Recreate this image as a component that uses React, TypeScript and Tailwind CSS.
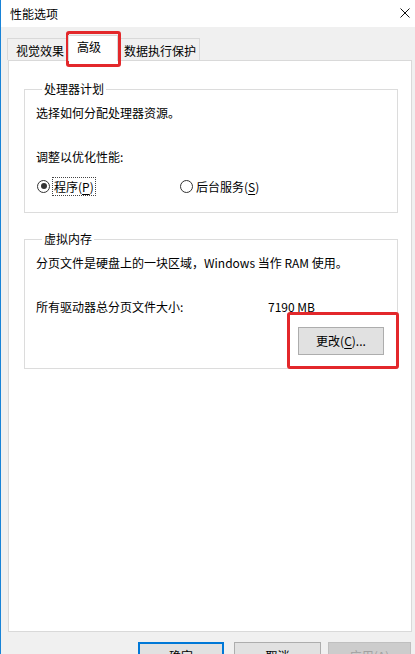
import React from 'react'

function Mn({ children }: { children: React.ReactNode }) {
  return <span className="underline underline-offset-2">{children}</span>
}

function Radio({ checked }: { checked?: boolean }) {
  return (
    <span className="flex h-[13px] w-[13px] shrink-0 items-center justify-center rounded-full border border-[#333333] bg-white">
      {checked && <span className="h-[6px] w-[6px] rounded-full bg-[#333333]" />}
    </span>
  )
}

function Group({ title, children }: { title: string; children: React.ReactNode }) {
  return (
    <fieldset className="border border-[#dcdcdc] pl-[11px]">
      <legend className="ml-[6px] px-[2px] leading-[16px]">{title}</legend>
      {children}
    </fieldset>
  )
}

function Tab({ label, active, className }: { label: string; active?: boolean; className: string }) {
  if (active) {
    return (
      <div className={`relative z-10 h-[26px] border border-b-0 border-[#d9d9d9] bg-white pt-[3px] leading-[16px] ${className}`}>
        {label}
      </div>
    )
  }
  return (
    <div className={`mb-px h-[22px] border border-b-0 border-[#d9d9d9] bg-[#f0f0f0] pt-[4px] leading-[16px] ${className}`}>
      {label}
    </div>
  )
}

export default function App() {
  return (
    <div className="relative h-[654px] w-[415px] overflow-hidden border-l border-[#1883d7] bg-[#f0f0f0] font-['Noto_Sans_CJK_SC','Noto_Sans',sans-serif] text-[12px] text-black">
      {/* title bar */}
      <div className="flex h-[27px] items-center justify-between bg-white pl-[9px] pr-[5px]">
        <span className="leading-[16px]">性能选项</span>
        <svg width="10" height="10" viewBox="0 0 10 10" className="-mt-[2px]">
          <path d="M0.5 0.5 L9.5 9.5 M9.5 0.5 L0.5 9.5" stroke="#111" strokeWidth="1" />
        </svg>
      </div>

      {/* tabs */}
      <div className="relative -mb-px mt-[8px] flex h-[26px] items-end pl-[6px]">
        <Tab label="视觉效果" className="w-[61px] pl-[8px]" />
        <Tab label="高级" active className="w-[50px] pl-[8px]" />
        <Tab label="数据执行保护" className="w-[82px] pl-[5px]" />
      </div>

      {/* tab panel */}
      <div className="ml-[7px] flex h-[572px] w-[404px] flex-col border border-[#d9d9d9] bg-white pl-[15px] pr-[13px] pt-[20px]">
        <Group title="处理器计划">
          <div className="pt-[8px] leading-[16px]">选择如何分配处理器资源。</div>
          <div className="mt-[28px] leading-[16px]">调整以优化性能:</div>
          <div className="mt-[11px] flex h-[20px] items-center pb-0">
            <div className="flex w-[144px] items-center">
              <span className="ml-px">
                <Radio checked />
              </span>
              <span className="ml-[2px] border border-dotted border-[#444] px-px leading-[17px]">
                程序(<Mn>P</Mn>)
              </span>
            </div>
            <div className="flex items-center">
              <Radio />
              <span className="ml-[3px] leading-[17px]">
                后台服务(<Mn>S</Mn>)
              </span>
            </div>
          </div>
          <div className="h-[16px]" />
        </Group>

        <div className="mt-[18px]">
          <Group title="虚拟内存">
            <div className="pt-[8px] leading-[16px]">分页文件是硬盘上的一块区域，Windows 当作 RAM 使用。</div>
            <div className="mt-[28px] flex leading-[16px]">
              <span className="w-[232px]">所有驱动器总分页文件大小:</span>
              <span>7190 MB</span>
            </div>
            <div className="mt-[12px] flex justify-end pb-[13px] pr-[13px]">
              <button className="flex h-[28px] w-[86px] items-center justify-center border border-[#adadad] bg-[#e1e1e1] leading-[16px]">
                更改(<Mn>C</Mn>)...
              </button>
            </div>
          </Group>
        </div>
      </div>

      {/* dialog buttons */}
      <div className="mt-[10px] flex">
        <button className="ml-[137px] flex h-[28px] w-[86px] items-center justify-center border-2 border-[#0078d7] bg-[#e1e1e1] leading-[16px]">
          确定
        </button>
        <button className="ml-[10px] flex h-[28px] w-[87px] items-center justify-center border border-[#adadad] bg-[#e1e1e1] leading-[16px]">
          取消
        </button>
        <button className="ml-[7px] flex h-[28px] w-[83px] items-center justify-center border border-[#bfbfbf] bg-[#cccccc] leading-[16px] text-[#a0a0a0]">
          应用(<Mn>A</Mn>)
        </button>
      </div>

      {/* red annotation boxes */}
      <div className="pointer-events-none absolute left-[65px] top-[31px] h-[36px] w-[55px] rounded-[3px] border-[3px] border-[#e3282b]" />
      <div className="pointer-events-none absolute left-[286px] top-[312px] h-[57px] w-[112px] rounded-[3px] border-[3px] border-[#e3282b]" />
    </div>
  )
}
